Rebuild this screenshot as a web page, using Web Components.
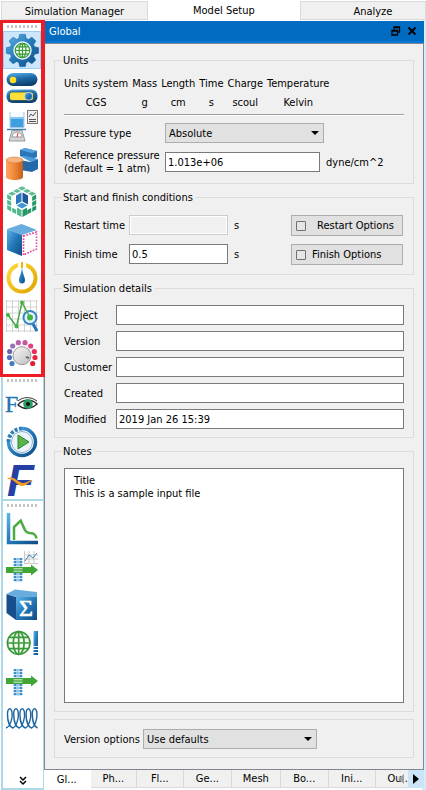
<!DOCTYPE html>
<html lang="en">
<head>
<meta charset="utf-8">
<title>Model Setup</title>
<style>
html, body { margin: 0; background: #fff; }
body { font: 11px/13px "DejaVu Sans Condensed", "DejaVu Sans", sans-serif; color: #000; }
.units { border-collapse: collapse; }
.units th, .units td { font-weight: normal; padding: 0 4px 6px 0; text-align: center; white-space: nowrap; }
.units td { padding-bottom: 5px; }
.rule { border: 0; border-top: 1px solid #a0a0a0; border-bottom: 1px solid #fff; margin: 0 0 7px; }
.stack { display: grid; gap: 9px; }
.tight { display: grid; gap: 6px; }
.split { display: flex; justify-content: space-between; }
</style>
</head>
<body>
<app-window>
  <main-tabs slot="tabs"></main-tabs>
  <tool-rail slot="rail">
    <tool-bar marked icons="gear,toggles,beaker,solids,cubes,face,gauge,probe,knob"></tool-bar>
    <tool-bar icons="view,play,flow"></tool-bar>
    <tool-bar last icons="curve,pipeplot,sum,globe,pipe,coil"></tool-bar>
  </tool-rail>
  <dock-panel heading="Global">
    <group-box heading="Units" style="--pad:10px 9px 8px">
      <table class="units">
        <tr><th>Units system</th><th>Mass</th><th>Length</th><th>Time</th><th>Charge</th><th>Temperature</th></tr>
        <tr><td>CGS</td><td>g</td><td>cm</td><td>s</td><td>scoul</td><td>Kelvin</td></tr>
      </table>
      <hr class="rule">
      <div class="tight" style="--label:101px">
        <select-field label="Pressure type" value="Absolute" style="--control:159px"></select-field>
        <text-field label="Reference pressure|(default = 1 atm)" value="1.013e+06" unit="dyne/cm^2" style="--control:155px"></text-field>
      </div>
    </group-box>
    <group-box heading="Start and finish conditions" style="--pad:11px 10px 10px 9px">
      <div class="stack" style="--label:65px;--control:99px">
        <div class="split"><text-field label="Restart time" value="" unit="s" disabled></text-field><check-button label="Restart Options" style="--space:11px"></check-button></div>
        <div class="split"><text-field label="Finish time" value="0.5" unit="s"></text-field><check-button label="Finish Options" style="--space:6px"></check-button></div>
      </div>
    </group-box>
    <group-box heading="Simulation details" style="--pad:10px 9px 8px">
      <div class="tight" style="--label:52px">
        <text-field label="Project" value=""></text-field>
        <text-field label="Version" value=""></text-field>
        <text-field label="Customer" value=""></text-field>
        <text-field label="Created" value=""></text-field>
        <text-field label="Modified" value="2019 Jan 26 15:39"></text-field>
      </div>
    </group-box>
    <group-box heading="Notes" style="--pad:10px 9px 8px" grow>
      <notes-field></notes-field>
    </group-box>
    <group-box style="--pad:9px 9px 8px">
      <select-field label="Version options" value="Use defaults" style="--label:79px;--control:174px"></select-field>
    </group-box>
  </dock-panel>
  <page-tabs slot="pages"></page-tabs>
</app-window>

<script>
const element = (name, render) => customElements.define(name, class extends HTMLElement {
  connectedCallback() {
    if (this.shadowRoot) return;
    const t = document.createElement('template');
    t.innerHTML = render(this);
    this.attachShadow({ mode: 'open' }).append(t.content.cloneNode(true));
  }
});

element('app-window', () => `<style>
:host { display: flex; flex-direction: column; min-height: 100vh; }
.main { display: flex; flex: 1; }
.content { flex: 1; min-width: 0; display: flex; flex-direction: column; padding: 1px 2px 1px 0; background: linear-gradient(90deg, #fff 99%, #d5edf8 99%); }
</style>
<slot name="tabs"></slot>
<div class="main"><slot name="rail"></slot><div class="content"><slot></slot><slot name="pages"></slot></div></div>`);

element('main-tabs', () => `<style>
:host { display: block; }
nav { display: flex; height: 20px; padding-left: 1px; }
button { font: inherit; color: #000; border: 1px solid #d9d9d9; background: #f0f0f0; padding: 1px 0 0; margin: 1px 0 0; flex: 147 1 0; min-width: 0; }
button.on { background: #fff; border-color: #fff; margin: 0; flex-grow: 152; padding: 0; }
button:last-child { flex-grow: 126; text-indent: 20px; }
</style>
<nav><button>Simulation Manager</button><button class="on">Model Setup</button><button>Analyze</button></nav>`);

element('tool-rail', () => `<style>
:host { display: flex; flex-direction: column; width: 44px; flex: none; background: #fff; }
</style><slot></slot>`);

const poly = (pts, fill, extra = '') => `<path d="M${pts}Z" fill="${fill}" ${extra}/>`;
const gearPath = (() => {
  const p = [];
  for (let i = 0; i < 8; i++) {
    for (const [off, r] of [[-.3, 12.6], [-.17, 16.3], [.17, 16.3], [.3, 12.6]]) {
      const a = i * Math.PI / 4 + off;
      p.push((16.5 + r * Math.cos(a)).toFixed(1) + ' ' + (16.5 + r * Math.sin(a)).toFixed(1));
    }
  }
  return p.join('L');
})();
const globe = (x, y, r, w) => `<g transform="translate(${x} ${y})" fill="none" stroke="#3b9a3a" stroke-width="${w}">
<circle r="${r}" fill="#f4fbf2"/><ellipse rx="${r * .48}" ry="${r}"/>
<path d="M0 ${-r}V${r}M${-r} 0H${r}M${-r * .85} ${-r * .5}H${r * .85}M${-r * .85} ${r * .5}H${r * .85}"/></g>`;
const cell = (o, u, v, i, j, n, fill) => {
  const at = (a, b) => `${(o[0] + u[0] * a / n + v[0] * b / n).toFixed(1)} ${(o[1] + u[1] * a / n + v[1] * b / n).toFixed(1)}`;
  return poly([at(i + .04, j + .04), at(i + .84, j + .04), at(i + .84, j + .84), at(i + .04, j + .84)].join('L'), fill);
};
const cubeGrid = () => {
  let s = '';
  for (let i = 0; i < 3; i++) for (let j = 0; j < 3; j++) {
    if (i === 0 || j === 0) s += cell([16, 0], [-15, 8], [15, 8], i, j, 3, '#63bd94');
    if (i < 2 && (i === 0 || j === 2)) s += cell([1, 8], [15, 8], [0, 16], i, j, 3, '#4fb98a');
    if (i > 0 && (i === 2 || j === 2)) s += cell([16, 16], [15, -8], [0, 16], i, j, 3, '#249766');
  }
  return s + poly('15.5 6.500V15.5L10 18.500V9.500', '#2e78bd') + poly('16.5 6.500V15.5L22 18.500V9.500', '#1b5799') + poly('16 16.5L21.5 19.500L16 22.5L10.5 19.500', '#3f97d3')
    + poly('11 21.500L15.500 24V31L11 28.500', '#4fb98a') + poly('21 21.500L16.500 24V31L21 28.500', '#249766');
};
const pipe = (y0, y1, ay) => {
  let s = '';
  for (let y = y0; y < y1; y += 3) s += `<rect x="7.500" y="${y}" width="9" height="2.300" rx="1" fill="#3d8cc8"/><rect x="10" y="${y}" width="4" height="2" fill="#8cc3ea"/>`;
  return s + `<path d="M0 ${ay - 3}H25V${ay - 5.5}L32 ${ay}L25 ${ay + 5.5}V${ay + 3}H0Z" fill="#3fa535"/><path d="M7.500 ${ay - 1.2}h9M7.500 ${ay + 1.2}h9" stroke="#d9f2d5"/>`;
};
const dots = [[6,25.5,'#3f7fc6'],[3.5,19.5,'#4c73bd'],[3.7,13.5,'#6a62ae'],[6.7,8,'#9a6fb4'],[12.3,4.7,'#b85fae'],[19,4.7,'#c9559f'],[24.7,8,'#e2437f'],[28.3,13.5,'#ea2e5c'],[29,19.5,'#e8243f'],[26.7,25.5,'#dd2233']];
const icons = {
  gear: `<path d="M${gearPath}Z" fill="url(#bl)" stroke="#15639f" stroke-width=".6"/><circle cx="16.5" cy="16.5" r="9.200" fill="#e9f5fd"/>` + globe(16.5, 16.5, 7.2, 1.2),
  toggles: `<rect x=".5" y="1" width="31" height="13" rx="6.500" fill="url(#bv)"/><circle cx="7" cy="8" r="3.300" fill="#ffdf20"/>
<rect x=".5" y="17.500" width="31" height="13.500" rx="6" fill="url(#bv)"/><rect x="3.500" y="20" width="24" height="8.500" rx="2.500" fill="#ffe03a" stroke="#0c3c68" stroke-width=".7"/><circle cx="22.500" cy="24.200" r="4" fill="url(#bl)" stroke="#dceaf5" stroke-width=".7"/>`,
  beaker: `<path d="M4 2V17.500H18V2" fill="#f4faff" stroke="#a9c8de"/><path d="M4.500 7H17.500V17H4.500Z" fill="#3f9fe0"/><path d="M4.500 7H17.500V9H4.500Z" fill="#85c6f2"/><path d="M1 19.500H20" stroke="#3b83ba" stroke-width="1.500"/>
<path d="M6 20.500H16L19 31H3Z" fill="#d4d4d4" stroke="#9b9b9b"/><path d="M6 27A5 5 0 0 1 16 27Z" fill="#fff" stroke="#999"/><path d="M11 27L12 23" stroke="#d33"/><rect x="21.500" y=".5" width="10" height="13" fill="#eee" stroke="#777"/><path d="M23 7L25 4L27 6L30 2M23 9.500H30M23 11.500H30" fill="none" stroke="#555"/>`,
  solids: poly('14 2L19 0L31 3V9L26 11L14 8', '#2c75b8') + poly('14 2L19 0L31 3L26 5', '#58a3de') + poly('9 11L24 14L32 11V21L26 24L9 21', '#2468a9') + poly('14 8L20 8L32 11L25 14', '#4f9ad8') + `<path d="M0 12V29C0 33 17 33 17 29V12Z" fill="url(#or)"/><ellipse cx="8.500" cy="12" rx="8.500" ry="3" fill="#f9b37c" stroke="#cc6a26" stroke-width=".5"/>`,
  cubes: cubeGrid(),
  face: poly('1 5L15.500 0L31 6L16 11', '#69addf') + poly('1 5L16 11V32L1 26', 'url(#bl)') + `<path d="M17.500 12L30.500 8V25L17.500 31Z" fill="#fff" stroke="#e7499b" stroke-width="1.700" stroke-dasharray="1.700 1.300"/>`,
  gauge: `<circle cx="16" cy="16" r="13.500" fill="#fff" stroke="url(#ye)" stroke-width="4"/><path d="M12 0H20V6H12Z" fill="#fff"/><path d="M16 0V6" stroke="#eeb800" stroke-width="2"/><path d="M16 5C16.500 12 19 15 19 18A3 3.500 0 0 1 13 18C13 15 15.500 12 16 5Z" fill="url(#bl)"/>`,
  probe: `<path d="M.5 0V32M6.500 0V32M12.500 0V32M18.500 0V32M24.500 0V32M30.500 0V32M0 1H32M0 7H32M0 13H32M0 19H32M0 25H32M0 31H32" stroke="#c9c9c9" stroke-width=".8"/><circle cx="24" cy="17.500" r="6.500" fill="#e2f2fd" stroke="#3584c8" stroke-width="2"/><path d="M27 24L31 31" stroke="#2872b5" stroke-width="3"/><path d="M2 15L10.500 26.500L16 2.500L24 17.500" fill="none" stroke="#43aa42" stroke-width="1.500"/><g fill="#43b244"><circle cx="2" cy="15" r="2"/><circle cx="10.500" cy="26.500" r="2"/><circle cx="16" cy="2.500" r="2"/><circle cx="24" cy="17.500" r="3"/></g>`,
  knob: dots.map(d => `<circle cx="${d[0]}" cy="${d[1]}" r="2.600" fill="${d[2]}"/>`).join('') + `<circle cx="16" cy="17.700" r="9" fill="url(#gy)" stroke="#9a9a9a"/><path d="M20 19L23 20" stroke="#555" stroke-width="1.500"/>`,
  view: `<text x="-1" y="24" font-family="Liberation Serif, serif" font-size="24" fill="#1f76b0" stroke="#1f76b0" stroke-width=".3">F</text><path d="M12 17C16 11.500 25 10 31 16C25 21 18 22 12 17Z" fill="#fff" stroke="#222" stroke-width="1.300"/><path d="M12 13C17 8.500 25 8.500 31 13" fill="none" stroke="#333"/><circle cx="22" cy="16" r="4.800" fill="#2b9d62"/><circle cx="22" cy="16" r="2" fill="#111"/>`,
  play: `<path d="M16 2.500A13.500 13.500 0 1 1 2.500 16" fill="none" stroke="url(#bl)" stroke-width="3.500"/><path d="M2.500 16A13.500 13.500 0 0 1 16 2.500" fill="none" stroke="#2d7db9" stroke-width="4" stroke-dasharray="3 1.500"/><circle cx="16" cy="16" r="10.500" fill="#eef5fa" stroke="#8ab5d2"/><path d="M12 9L23 16L12 23Z" fill="#59b34a" stroke="#2b852a"/>`,
  flow: `<text x="1" y="31.500" font-family="Liberation Sans, sans-serif" font-size="44" font-weight="bold" font-style="italic" fill="#2440a3">F</text><path d="M1 15C8 10 12 20 18 19S23 15 27 17C23 17 21 22 16 22S8 14 1 15Z" fill="#f59a22"/>`,
  curve: `<path d="M2.500 0V29.500H32" fill="none" stroke="url(#bl)" stroke-width="3.500"/><path d="M8 27V14L14.700 7.700L18 15C20 21 24 20 27 20.500Q30 22 30.500 25.500" fill="none" stroke="#4cab42" stroke-width="2.500"/>`,
  pipeplot: pipe(7, 31, 19) + `<path d="M18.500 0V12.500H32M18.500 4H32M18.500 8H32M23 0V12M28 0V12" fill="none" stroke="#bbb" stroke-width=".8"/><path d="M19 10L23 4L27 7L31 2" fill="none" stroke="#3d82b8"/>`,
  sum: poly('.5 5L10 8V31L.5 24', '#164f8b') + poly('.5 5L9 .5L31 3V8H10', '#69addf') + poly('10 8H31V31H10', 'url(#bl)') + `<text x="13" y="27" font-family="Liberation Serif, serif" font-size="24" fill="#fff" stroke="#fff" stroke-width=".6">Σ</text>`,
  globe: globe(12.7, 16, 11.3, 1.7) + `<path d="M27.500 4H32V19H27.500ZM27.500 20H32V22H27.500ZM27.500 23H32V25H27.500ZM27.500 26H32V28H27.500Z" fill="url(#bl)"/>`,
  pipe: pipe(4, 29, 16),
  coil: `<g fill="none" stroke="#1d659f" stroke-width="1.400"><path d="M0 25${[0, 6.2, 12.4, 18.6, 24.8].map(x => `C${x + 4} 24 ${x + 7} 15 ${x + 6} 9C${x + 5} 4 ${x + 1.5} 5 ${x + 1.5} 11C${x + 1.5} 19 ${x + 4} 24 ${x + 6.8} 25`).join('')}"/></g>`
};
const names = { gear: 'Global', toggles: 'Physics', beaker: 'Fluids', solids: 'Geometry', cubes: 'Mesh', face: 'Boundaries', gauge: 'Initial', probe: 'Output', knob: 'Numerics', view: 'View', play: 'Run', flow: 'Flow', curve: 'Plot', pipeplot: 'Flux plot', sum: 'Sum', globe: 'General', pipe: 'Flux', coil: 'Springs' };

element('tool-bar', host => `<style>
:host { display: flex; flex-direction: column; position: relative; border: 2px solid #add8e6; border-right-width: 1px; margin-left: 1px; border-bottom: 0; }
:host([marked]) { border-color: #fff; padding-bottom: 1px; }
:host([last]) { flex: 1; border-bottom: 2px solid #add8e6; }
.handle { height: 3px; margin: 3px 4px; background: repeating-linear-gradient(90deg, #c4c4c4 0 2px, transparent 2px 4px); }
button { display: flex; align-items: center; justify-content: center; width: 38px; height: 38px; padding: 0; margin: 0; border: 0; background: none; }
:host([marked]) button:first-of-type { background: #cce6fb; box-shadow: inset 0 0 0 1px #99cff5; }
svg { display: block; overflow: visible; }
.mark { position: absolute; inset: -2px -2px -3px -3px; border: 3px solid #ee1c24; border-right-width: 4px; pointer-events: none; z-index: 2; }
.more { margin: auto auto 0; height: 14px; width: 12px; }
.defs { position: absolute; }
</style>
<svg class="defs" width="0" height="0"><defs>
<linearGradient id="bl" x2="1" y2="1"><stop stop-color="#5fb4e8"/><stop offset=".5" stop-color="#2377b8"/><stop offset="1" stop-color="#104c82"/></linearGradient>
<linearGradient id="bv" x2=".3" y2="1"><stop stop-color="#5fb4e8"/><stop offset=".5" stop-color="#1f6cac"/><stop offset="1" stop-color="#0d406f"/></linearGradient>
<linearGradient id="or"><stop stop-color="#f8a565"/><stop offset=".4" stop-color="#f58f3f"/><stop offset="1" stop-color="#c4601c"/></linearGradient>
<linearGradient id="ye" x2="1" y2="1"><stop stop-color="#ffd93a"/><stop offset="1" stop-color="#e0a400"/></linearGradient>
<linearGradient id="gy" x2="1" y2="1"><stop stop-color="#fafafa"/><stop offset="1" stop-color="#bcbcbc"/></linearGradient>
</defs></svg>
<div class="handle"></div>
${host.getAttribute('icons').split(',').map(n => `<button aria-label="${names[n]}"><svg width="32" height="32" viewBox="0 0 32 32">${icons[n]}</svg></button>`).join('')}
${host.hasAttribute('marked') ? '<div class="mark"></div>' : ''}
${host.hasAttribute('last') ? '<button class="more" aria-label="More tools"><svg width="8" height="10" viewBox="0 0 8 10"><path d="M1 1L4 4L7 1M1 5L4 8L7 5" fill="none" stroke="#000" stroke-width="1.500"/></svg></button>' : ''}`);

element('dock-panel', host => `<style>
:host { display: flex; flex-direction: column; flex: 1; }
header { display: flex; align-items: center; height: 22px; box-sizing: border-box; background: #006cc1; border-bottom: 2px solid #0078d7; color: #fff; padding: 0 4px; margin-left: 1px; }
h1 { font: inherit; margin: 0; flex: 1; }
header button { border: 0; background: none; padding: 0; width: 16px; height: 16px; display: grid; place-items: center; }
.body { flex: 1; display: flex; flex-direction: column; border: 1px solid #828790; background: #f0f0f0; padding: 10px 9px 11px; gap: 7px; }
</style>
<header><h1>${host.getAttribute('heading')}</h1>
<button aria-label="Float"><svg width="10" height="10" viewBox="0 0 10 10"><path d="M3 3.500V1H8.500V6H6.500M3 1.500H8.500M1 4.500H6.500V9H1ZM1 5H6.500" fill="none" stroke="#000" stroke-width="1.300"/></svg></button>
<button aria-label="Close"><svg width="10" height="10" viewBox="0 0 10 10"><path d="M1.500 1.500L8.500 8.500M8.500 1.500L1.500 8.500" stroke="#000" stroke-width="1.800"/></svg></button></header>
<div class="body"><slot></slot></div>`);

element('group-box', host => `<style>
:host { display: block; }
:host([grow]) { flex: 1; display: flex; flex-direction: column; }
fieldset { border: 1px solid #dcdcdc; margin: 0; padding: var(--pad); min-width: 0; }
:host([grow]) fieldset { flex: 1; display: flex; flex-direction: column; }
legend { padding: 0 3px 0 1px; margin-left: -2px; }
</style>
<fieldset>${host.hasAttribute('heading') ? `<legend>${host.getAttribute('heading')}</legend>` : ''}<slot></slot></fieldset>`);

element('text-field', host => `<style>
:host { display: flex; align-items: center; }
label { width: var(--label); flex: none; white-space: nowrap; }
input { flex: 1 1 0; min-width: 0; width: 100%; height: 20px; box-sizing: border-box; border: 1px solid #7a7a7a; background: #fff; font: inherit; padding: 0 2px; margin: 0; color: #000; border-radius: 0; }
:host([unit]) input { flex: none; width: var(--control); }
input:disabled { background: #f0f0f0; border-color: #ccc; box-shadow: inset 0 0 0 1px #fff; }
span { margin-left: 6px; }
</style>
<label for="i">${host.getAttribute('label').replace('|', '<br>')}</label><input id="i" value="${host.getAttribute('value')}" ${host.hasAttribute('disabled') ? 'disabled' : ''}>${host.hasAttribute('unit') ? `<span>${host.getAttribute('unit')}</span>` : ''}`);

element('select-field', host => `<style>
:host { display: flex; align-items: center; }
label { width: var(--label); flex: none; white-space: nowrap; }
.box { position: relative; width: var(--control); }
select { appearance: none; display: block; width: 100%; height: 20px; box-sizing: border-box; border: 1px solid #adadad; background: #e1e1e1; font: inherit; padding: 0 20px 0 3px; margin: 0; color: #000; border-radius: 0; }
svg { position: absolute; right: 5px; top: 8px; pointer-events: none; }
</style>
<label for="s">${host.getAttribute('label')}</label><div class="box"><select id="s"><option>${host.getAttribute('value')}</option></select><svg width="8" height="4" viewBox="0 0 8 4"><path d="M0 0H8L4 4Z"/></svg></div>`);

element('check-button', host => `<style>
:host { display: block; width: 112px; }
label { display: flex; align-items: center; height: 21px; box-sizing: border-box; border: 1px solid #adadad; background: #e1e1e1; padding-left: 4px; gap: var(--space); white-space: nowrap; margin-bottom: -1px; }
input { appearance: none; width: 10px; height: 10px; box-sizing: border-box; border: 1px solid #707070; border-radius: 1px; background: #e6e6e6; margin: 0; flex: none; }
</style><label><input type="checkbox">${host.getAttribute('label')}</label>`);

element('notes-field', () => `<style>
:host { display: flex; flex: 1; }
textarea { flex: 1; min-width: 0; min-height: 120px; box-sizing: border-box; border: 1px solid #7a7a7a; border-radius: 0; background: #fff; font: inherit; color: #000; padding: 5px 9px; margin: 0; resize: none; }
</style><textarea aria-label="Notes">Title
This is a sample input file</textarea>`);

element('page-tabs', () => `<style>
:host { display: block; }
nav { display: flex; position: relative; height: 19px; }
button { font: inherit; color: #000; flex: 47 1 0; min-width: 0; height: 18px; margin: 0; padding: 0; background: #f0f0f0; border: 1px solid #d9d9d9; border-width: 0 1px 1px 0; white-space: nowrap; }
button.on { background: #fff; height: 19px; border-color: #fff; }
.w { flex-grow: 49; }
.arrow { position: absolute; top: 0; right: 0; width: 16px; flex: none; background: #cce4f7; display: grid; place-items: center; border: 0; }
.left { right: 16px; background: none; width: 14px; }
</style>
<nav><button class="on">Gl...</button><button>Ph...</button><button>Fl...</button><button class="w">Ge...</button><button class="w">Mesh</button><button class="w">Bo...</button><button>Ini...</button><button class="w">Ou...</button>
<button class="arrow left" aria-label="Previous tabs"><svg width="6" height="10" viewBox="0 0 6 10"><path d="M6 0V10L0 5Z" fill="#a0a0a0"/></svg></button>
<button class="arrow" aria-label="Next tabs"><svg width="6" height="10" viewBox="0 0 6 10"><path d="M0 0V10L6 5Z"/></svg></button></nav>`);
</script>
</body>
</html>
